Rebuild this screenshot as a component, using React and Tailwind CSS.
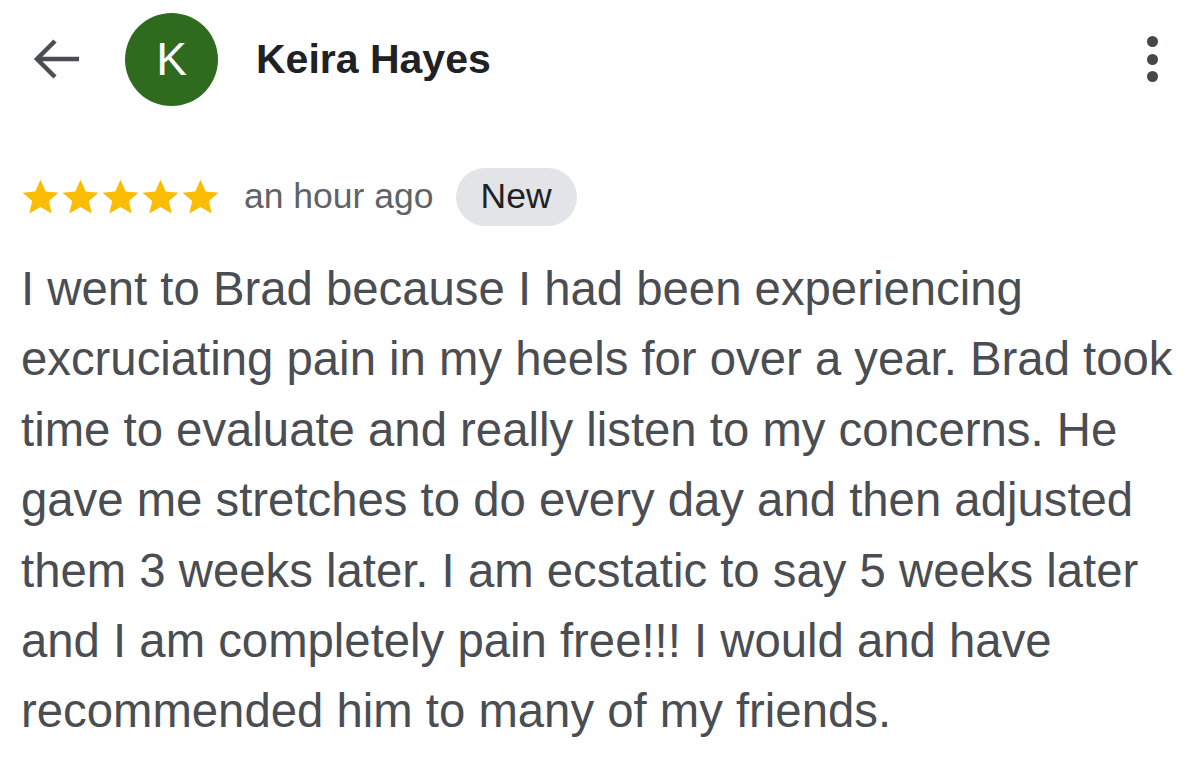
import React from "react";

function Star() {
  return (
    <svg width="41" height="41" viewBox="0 0 24 24" className="shrink-0 -mx-[0.5px]">
      <path fill="#fbbc04" d="M12 1.6l3.05 6.85 7.45.7-5.62 4.97 1.66 7.3L12 17.6l-6.54 3.82 1.66-7.3L1.5 9.15l7.45-.7z" />
    </svg>
  );
}

const lines = [
  "I went to Brad because I had been experiencing",
  "excruciating pain in my heels for over a year. Brad took",
  "time to evaluate and really listen to my concerns. He",
  "gave me stretches to do every day and then adjusted",
  "them 3 weeks later. I am ecstatic to say 5 weeks later",
  "and I am completely pain free!!! I would and have",
  "recommended him to many of my friends.",
];

export default function App() {
  return (
    <div className="w-[1200px] h-[773px] bg-white overflow-hidden font-['Liberation_Sans',Arial,sans-serif]">
      <div className="flex items-center h-[118px] pl-[30px] pr-[42px]">
        <svg width="52" height="52" viewBox="0 0 52 52" className="shrink-0">
          <path d="M49 26H7M25 8L7 26l18 18" fill="none" stroke="#4a4d52" strokeWidth="4.5" strokeLinecap="butt" />
        </svg>
        <div className="ml-[43px] w-[93px] h-[93px] rounded-full bg-[#2f6b1e] flex items-center justify-center text-white text-[46px] leading-none shrink-0">
          K
        </div>
        <div className="ml-[38px] text-[41px] font-bold text-[#202124] leading-none">Keira Hayes</div>
        <div className="ml-auto flex flex-col gap-[6.5px] items-center">
          <span className="w-[11px] h-[11px] rounded-full bg-[#45474b]" />
          <span className="w-[11px] h-[11px] rounded-full bg-[#45474b]" />
          <span className="w-[11px] h-[11px] rounded-full bg-[#45474b]" />
        </div>
      </div>
      <div className="flex items-center mt-[50px] pl-[20px]">
        <div className="flex">
          <Star />
          <Star />
          <Star />
          <Star />
          <Star />
        </div>
        <span className="ml-[24px] text-[35.5px] text-[#5f6368] leading-none">an hour ago</span>
        <span className="ml-[22px] h-[58px] px-[25px] rounded-full bg-[#e2e4e7] flex items-center text-[35.5px] font-medium text-[#202124] leading-none">
          New
        </span>
      </div>
      <div className="mt-[28px] pl-[21px] text-[47.3px] leading-[70.4px] text-[#4a4d52] whitespace-nowrap">
        {lines.map((l, i) => (
          <div key={i}>{l}</div>
        ))}
      </div>
    </div>
  );
}
